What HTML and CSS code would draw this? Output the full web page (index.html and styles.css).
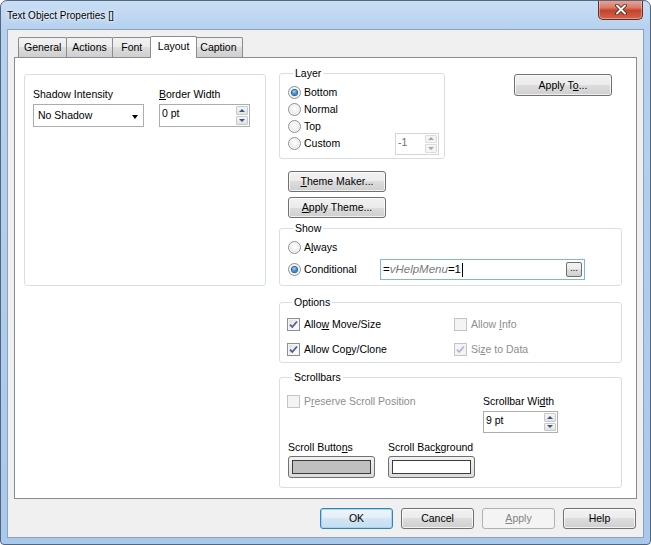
FILE: index.html
```html
<!DOCTYPE html>
<html>

<head>
    <title>Text Object Properties</title>
    <link rel="stylesheet" href="styles.css">
</head>

<body>
    <div class="window">
        <div class="titlebar">
            <span class="title">Text Object Properties []</span>
            <div class="close-btn">
                <svg width="12" height="11" viewBox="0 0 12 11">
                    <path d="M2 1.5 L10 9.5 M10 1.5 L2 9.5" stroke="#4b1a14" stroke-width="3.6" stroke-linecap="round" />
                    <path d="M2 1.5 L10 9.5 M10 1.5 L2 9.5" stroke="#fff" stroke-width="2" stroke-linecap="round" />
                </svg>
            </div>
        </div>

        <div class="client">
            <div class="tabs">
                <div class="tab">General</div>
                <div class="tab">Actions</div>
                <div class="tab">Font</div>
                <div class="tab active">Layout</div>
                <div class="tab">Caption</div>
            </div>

            <div class="tab-page">
                <div class="left-box">
                    <div class="field">
                        <div class="field-label">Shadow Intensity</div>
                        <div class="combo">
                            <span>No Shadow</span>
                            <span class="combo-arrow"></span>
                        </div>
                    </div>
                    <div class="field">
                        <div class="field-label"><u>B</u>order Width</div>
                        <div class="spin border-spin">
                            <span class="spin-value">0 pt</span>
                            <span class="spin-buttons">
                                <span class="spin-btn"><span class="arrow-up"></span></span>
                                <span class="spin-btn"><span class="arrow-down"></span></span>
                            </span>
                        </div>
                    </div>
                </div>

                <div class="right-col">
                    <div class="top-row">
                        <fieldset class="group layer-group">
                            <legend>Layer</legend>
                            <div class="radio-row first">
                                <span class="radio checked"></span><span>Bottom</span>
                            </div>
                            <div class="radio-row">
                                <span class="radio"></span><span>Normal</span>
                            </div>
                            <div class="radio-row">
                                <span class="radio"></span><span>Top</span>
                            </div>
                            <div class="radio-row">
                                <span class="radio"></span><span>Custom</span>
                                <div class="spin custom-spin disabled">
                                    <span class="spin-value">-1</span>
                                    <span class="spin-buttons">
                                        <span class="spin-btn"><span class="arrow-up"></span></span>
                                        <span class="spin-btn"><span class="arrow-down"></span></span>
                                    </span>
                                </div>
                            </div>
                        </fieldset>
                        <button class="btn apply-to">Apply T<u>o</u>...</button>
                    </div>

                    <div class="theme-buttons">
                        <button class="btn"><u>T</u>heme Maker...</button>
                        <button class="btn"><u>A</u>pply Theme...</button>
                    </div>

                    <fieldset class="group show-group">
                        <legend>Show</legend>
                        <div class="radio-row first">
                            <span class="radio"></span><span>A<u>l</u>ways</span>
                        </div>
                        <div class="radio-row cond-row">
                            <span class="cond-label"><span class="radio checked"></span><span>Conditional</span></span>
                            <div class="expr-input">
                                <span class="expr-text">=<i>vHelpMenu</i>=1<span class="caret"></span></span>
                                <span class="dots-btn">...</span>
                            </div>
                        </div>
                    </fieldset>

                    <fieldset class="group options-group">
                        <legend>Options</legend>
                        <div class="options-grid">
                            <div class="check-row"><span class="check checked"></span><span>Allo<u>w</u> Move/Size</span></div>
                            <div class="check-row disabled"><span class="check"></span><span>Allow <u>I</u>nfo</span></div>
                            <div class="check-row"><span class="check checked"></span><span>Allow Co<u>p</u>y/Clone</span></div>
                            <div class="check-row disabled"><span class="check checked"></span><span>Si<u>z</u>e to Data</span></div>
                        </div>
                    </fieldset>

                    <fieldset class="group scroll-group">
                        <legend>Scrollbars</legend>
                        <div class="scroll-top">
                            <div class="check-row disabled preserve"><span class="check"></span><span>P<u>r</u>eserve Scroll Position</span></div>
                            <div class="field">
                                <div class="field-label">Scrollbar Wi<u>d</u>th</div>
                                <div class="spin width-spin">
                                    <span class="spin-value">9 pt</span>
                                    <span class="spin-buttons">
                                        <span class="spin-btn"><span class="arrow-up"></span></span>
                                        <span class="spin-btn"><span class="arrow-down"></span></span>
                                    </span>
                                </div>
                            </div>
                        </div>
                        <div class="scroll-bottom">
                            <div class="field">
                                <div class="field-label">Scroll Butto<u>n</u>s</div>
                                <div class="color-btn"><span class="swatch gray"></span></div>
                            </div>
                            <div class="field">
                                <div class="field-label">Scroll Bac<u>k</u>ground</div>
                                <div class="color-btn"><span class="swatch white"></span></div>
                            </div>
                        </div>
                    </fieldset>
                </div>
            </div>

            <div class="footer">
                <button class="btn default">OK</button>
                <button class="btn">Cancel</button>
                <button class="btn" disabled><u>A</u>pply</button>
                <button class="btn">Help</button>
            </div>
        </div>
    </div>
</body>

</html>
```

FILE: styles.css
```css
* {
    box-sizing: border-box;
}

body {
    margin: 0;
    font-family: "Liberation Sans", Arial, sans-serif;
    font-size: 10.5px;
    line-height: 13px;
    color: #000;
    background: #fff;
}

u {
    text-underline-offset: 1px;
}

/* window frame */

.window {
    width: 651px;
    height: 545px;
    border: 1px solid #52667d;
    border-radius: 7px 7px 4px 4px;
    background: linear-gradient(to bottom, #c8def5 0, #b6d1ef 28px, #a9c8eb 100%);
    display: flex;
    flex-direction: column;
    overflow: hidden;
}

.titlebar {
    height: 28px;
    display: flex;
    align-items: flex-start;
    padding-left: 6px;
}

.title {
    margin-top: 8px;
    font-size: 10px;
    text-shadow: 0 0 6px #fff, 0 0 3px #fff;
}

.close-btn {
    margin-left: auto;
    margin-right: 7px;
    margin-top: -1px;
    width: 45px;
    height: 20px;
    border: 1px solid #6a2a22;
    border-top: none;
    border-radius: 0 0 5px 5px;
    background: linear-gradient(#eaa89a 0%, #d87a66 40%, #c4432c 55%, #d2664c 100%);
    box-shadow: inset 0 0 0 1px rgba(255, 255, 255, 0.35);
    display: flex;
    align-items: center;
    justify-content: center;
}

.client {
    flex: 1;
    margin: 0 6px 6px;
    border: 1px solid #8da2b7;
    background: #f0f0f0;
    padding: 0 6px;
    display: flex;
    flex-direction: column;
}

/* tabs */

.tabs {
    height: 27px;
    display: flex;
    align-items: flex-end;
    padding-left: 5px;
    position: relative;
    z-index: 1;
}

.tab {
    height: 20px;
    min-width: 40px;
    padding: 3px 5px 0;
    margin-left: -1px;
    text-align: center;
    border: 1px solid #898c95;
    border-bottom: none;
    border-radius: 2px 2px 0 0;
    background: linear-gradient(#f2f2f2 0%, #ebebeb 50%, #dddddd 50%, #cfcfcf 100%);
}

.tab.active {
    height: 22px;
    padding-top: 3px;
    margin: 0 -2px -1px -2px;
    padding-left: 7px;
    padding-right: 7px;
    background: #fff;
    position: relative;
    z-index: 2;
}

.tab-page {
    height: 442px;
    border: 1px solid #898c95;
    background: #fff;
    display: flex;
    align-items: flex-start;
    gap: 13px;
    padding: 9px 0 0 9px;
}

/* common controls */

.field-label {
    margin-bottom: 3px;
}

.left-box {
    width: 242px;
    height: 212px;
    margin-top: 7px;
    border: 1px solid #d5dfe5;
    border-radius: 3px;
    display: flex;
    gap: 15px;
    padding: 13px 0 0 8px;
}

.combo {
    width: 111px;
    height: 23px;
    border: 1px solid #abadb3;
    background: #fff;
    display: flex;
    align-items: center;
    justify-content: space-between;
    padding: 0 5px 0 4px;
}

.combo-arrow {
    border-left: 3.5px solid transparent;
    border-right: 3.5px solid transparent;
    border-top: 4px solid #000;
    margin-top: 2px;
}

.spin {
    height: 23px;
    border: 1px solid #abadb3;
    background: #fff;
    display: flex;
}

.spin-value {
    flex: 1;
    padding: 2px 2px 0;
}

.spin-buttons {
    width: 15px;
    display: flex;
    flex-direction: column;
    gap: 1px;
    padding: 1px 1px 1px 2px;
}

.spin-btn {
    flex: 1;
    border: 1px solid #c8c8c8;
    border-radius: 1px;
    background: linear-gradient(#f6f6f6, #e2e2e2);
    display: flex;
    align-items: center;
    justify-content: center;
}

.arrow-up {
    border-left: 3px solid transparent;
    border-right: 3px solid transparent;
    border-bottom: 3px solid #34568a;
}

.arrow-down {
    border-left: 3px solid transparent;
    border-right: 3px solid transparent;
    border-top: 3px solid #34568a;
}

.spin.disabled {
    border-color: #d5d5d5;
    color: #6d6d6d;
}

.spin.disabled .spin-btn {
    border-color: #dcdcdc;
    background: #f4f4f4;
}

.spin.disabled .arrow-up {
    border-bottom-color: #a6a6a6;
}

.spin.disabled .arrow-down {
    border-top-color: #a6a6a6;
}

.border-spin {
    width: 91px;
}

.btn {
    font: inherit;
    color: #000;
    height: 21px;
    padding: 0;
    border: 1px solid #707070;
    border-radius: 3px;
    background: linear-gradient(#f2f2f2 0%, #ebebeb 50%, #dddddd 50%, #cfcfcf 100%);
    box-shadow: inset 0 0 0 1px rgba(255, 255, 255, 0.7);
}

.btn.default {
    border-color: #3c7fb1;
    box-shadow: inset 0 0 0 1px #9bd7f9;
    background: linear-gradient(#eef5fb 0%, #e3eef8 50%, #d4e5f4 50%, #c8ddef 100%);
}

.btn:disabled {
    border-color: #adb2b5;
    background: #f4f4f4;
    box-shadow: none;
    color: #838383;
}

/* right column */

.right-col {
    width: 343px;
    display: flex;
    flex-direction: column;
}

.top-row {
    display: flex;
    justify-content: space-between;
    align-items: flex-start;
}

.group {
    margin: 0;
    padding: 0;
    border: 1px solid #d5dfe5;
    border-radius: 3px;
    min-width: 0;
}

.group legend {
    padding: 0 2px;
    margin-left: 5px;
    line-height: 13px;
}

.layer-group {
    width: 166px;
    padding: 0 5px 6px 8px;
}

.radio-row {
    height: 17px;
    display: flex;
    align-items: center;
}

.radio-row.first {
    margin-top: 4px;
}

.radio {
    width: 13px;
    height: 13px;
    margin-right: 3px;
    border: 1px solid #8e8f8f;
    border-radius: 50%;
    background: radial-gradient(circle at 50% 45%, #fff 0%, #f0f0f0 45%, #d2d2d2 100%);
    box-shadow: inset 0 0 0 1px rgba(255, 255, 255, 0.8);
    display: flex;
    align-items: center;
    justify-content: center;
    flex-shrink: 0;
}

.radio.checked::after {
    content: "";
    width: 5px;
    height: 5px;
    border-radius: 50%;
    background: radial-gradient(circle at 45% 35%, #9fdcff 0%, #3c8ed6 50%, #13467f 100%);
    box-shadow: 0 0 0 1px #2a5c8f;
}

.custom-spin {
    width: 44px;
    height: 22px;
    margin-left: auto;
}

.apply-to {
    width: 98px;
    height: 22px;
    margin-top: 7px;
    margin-right: 10px;
}

.theme-buttons {
    display: flex;
    flex-direction: column;
    gap: 5px;
    margin: 12px 0 0 9px;
}

.theme-buttons .btn {
    width: 98px;
    height: 21px;
}

.show-group {
    margin-top: 4px;
    padding: 0 0 5px 8px;
}

.cond-row {
    height: 21px;
    margin-top: 3px;
}

.cond-label {
    width: 92px;
    display: flex;
    align-items: center;
}

.expr-input {
    width: 205px;
    height: 21px;
    border: 1px solid #7eb4ea;
    background: #fff;
    display: flex;
    align-items: center;
    padding: 0 2px 0 2px;
    font-size: 11.5px;
}

.expr-text {
    flex: 1;
    display: flex;
    align-items: center;
}

.expr-text i {
    color: #7a7a7a;
}

.caret {
    width: 1px;
    height: 14px;
    margin-left: 1px;
    background: #000;
}

.dots-btn {
    width: 16px;
    height: 15px;
    border: 1px solid #707070;
    border-radius: 2px;
    background: linear-gradient(#f2f2f2 0%, #ebebeb 50%, #dddddd 50%, #cfcfcf 100%);
    font-size: 9px;
    line-height: 10px;
    text-align: center;
}

.options-group {
    margin-top: 10px;
    padding: 0 0 5px 7px;
}

.options-grid {
    display: grid;
    grid-template-columns: 167px 1fr;
    row-gap: 9px;
    margin-top: 7px;
}

.check-row {
    height: 16px;
    display: flex;
    align-items: center;
}

.check {
    width: 13px;
    height: 13px;
    margin-right: 4px;
    border: 1px solid #8e8f8f;
    background: linear-gradient(135deg, #dcdcdc 0%, #f4f4f4 60%, #fff 100%);
    box-shadow: inset 0 0 0 1px #f4f4f4;
    flex-shrink: 0;
    position: relative;
}

.check.checked::after {
    content: "";
    position: absolute;
    left: 1px;
    top: 1px;
    width: 9px;
    height: 9px;
    background: no-repeat center / 9px 9px url("data:image/svg+xml,%3Csvg xmlns='http://www.w3.org/2000/svg' viewBox='0 0 9 9'%3E%3Cpath d='M1 4.6 L3.3 7 L8 1.5' fill='none' stroke='%234a5d8f' stroke-width='1.8'/%3E%3C/svg%3E");
}

.check-row.disabled {
    color: #8d8d8d;
}

.check-row.disabled .check {
    border-color: #c4c4c4;
    background: #f4f4f4;
    box-shadow: none;
}

.check-row.disabled .check.checked::after {
    opacity: 0.4;
}

.scroll-group {
    margin-top: 8px;
    padding: 0 0 9px 7px;
}

.scroll-top {
    display: flex;
    margin-top: 9px;
}

.preserve {
    width: 196px;
}

.scroll-top .field-label {
    margin-top: 2px;
}

.width-spin {
    width: 75px;
    height: 22px;
}

.scroll-bottom {
    display: flex;
    gap: 13px;
    margin-top: 8px;
    padding-left: 1px;
}

.scroll-bottom .field-label {
    margin-bottom: 2px;
}

.color-btn {
    width: 87px;
    height: 22px;
    border: 1px solid #707070;
    border-radius: 3px;
    background: linear-gradient(#f2f2f2, #dcdcdc);
    padding: 3px;
    display: flex;
}

.swatch {
    flex: 1;
    border: 1px solid #3c3c3c;
}

.swatch.gray {
    background: #c0c0c0;
}

.swatch.white {
    background: #fff;
}

/* bottom buttons */

.footer {
    display: flex;
    justify-content: flex-end;
    gap: 8px;
    margin-top: 9px;
    padding-right: 1px;
}

.footer .btn {
    width: 73px;
}
```
